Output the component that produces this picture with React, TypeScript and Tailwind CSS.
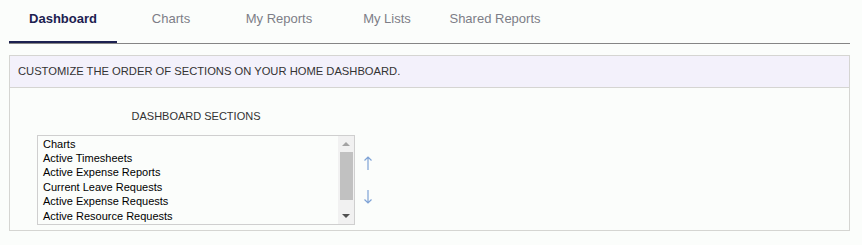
const tabs = ['Dashboard', 'Charts', 'My Reports', 'My Lists', 'Shared Reports'];

const sections = [
  'Charts',
  'Active Timesheets',
  'Active Expense Reports',
  'Current Leave Requests',
  'Active Expense Requests',
  'Active Resource Requests',
];

function ArrowUp() {
  return (
    <svg width="10" height="16" viewBox="0 0 10 16" className="block">
      <path d="M5 15V2M1.5 5.5L5 2l3.5 3.5" fill="none" stroke="#7fa3d6" strokeWidth="1.2" />
    </svg>
  );
}

function ArrowDown() {
  return (
    <svg width="10" height="16" viewBox="0 0 10 16" className="block">
      <path d="M5 1v13M1.5 10.5L5 14l3.5-3.5" fill="none" stroke="#7fa3d6" strokeWidth="1.2" />
    </svg>
  );
}

export default function App() {
  return (
    <div className="h-[245px] w-[862px] bg-[#fbfdfb] px-[9px] pt-[7px] font-['Liberation_Sans',Arial,sans-serif]">
      <div className="flex w-[841px] border-b border-[#858585]">
        {tabs.map((tab, i) => (
          <div
            key={tab}
            className={`flex h-[36px] w-[108px] justify-center pt-[2px] text-[13px] ${
              i === 0
                ? 'border-b-2 border-[#1c2150] -mb-px font-bold text-[#1c2150]'
                : 'text-[#7d7d87]'
            }`}
          >
            {tab}
          </div>
        ))}
      </div>

      <div className="mt-[11px] w-[841px] border border-[#d5d5d2]">
        <div className="flex h-[32px] items-center border-b border-[#d5d5d2] bg-[#f3f1fb] px-[8px] text-[11.2px] text-[#333]">
          CUSTOMIZE THE ORDER OF SECTIONS ON YOUR HOME DASHBOARD.
        </div>
        <div className="h-[142px] pl-[27px]">
          <div className="w-[318px] pt-[20px] pb-[10px] text-center text-[11px] text-[#333]">DASHBOARD SECTIONS</div>
          <div className="flex items-center gap-[8px]">
            <div className="flex h-[90px] w-[318px] border border-[#cfcfcf] bg-[#fbfdfb]">
              <div className="flex-1 pl-[5px] pt-px text-[11px] leading-[14.4px] text-black">
                {sections.map((s) => (
                  <div key={s}>{s}</div>
                ))}
              </div>
              <div className="flex w-[16px] flex-col items-center bg-[#f1f1f1]">
                <div className="flex h-[16px] items-center justify-center">
                  <div className="h-0 w-0 border-x-[4px] border-b-[4px] border-x-transparent border-b-[#a3a3a3]" />
                </div>
                <div className="h-[48px] w-[13px] bg-[#c1c1c1]" />
                <div className="flex-1" />
                <div className="flex h-[16px] items-center justify-center">
                  <div className="h-0 w-0 border-x-[4px] border-t-[4px] border-x-transparent border-t-[#505050]" />
                </div>
              </div>
            </div>
            <div className="flex flex-col gap-[18px]">
              <ArrowUp />
              <ArrowDown />
            </div>
          </div>
        </div>
      </div>
    </div>
  );
}
